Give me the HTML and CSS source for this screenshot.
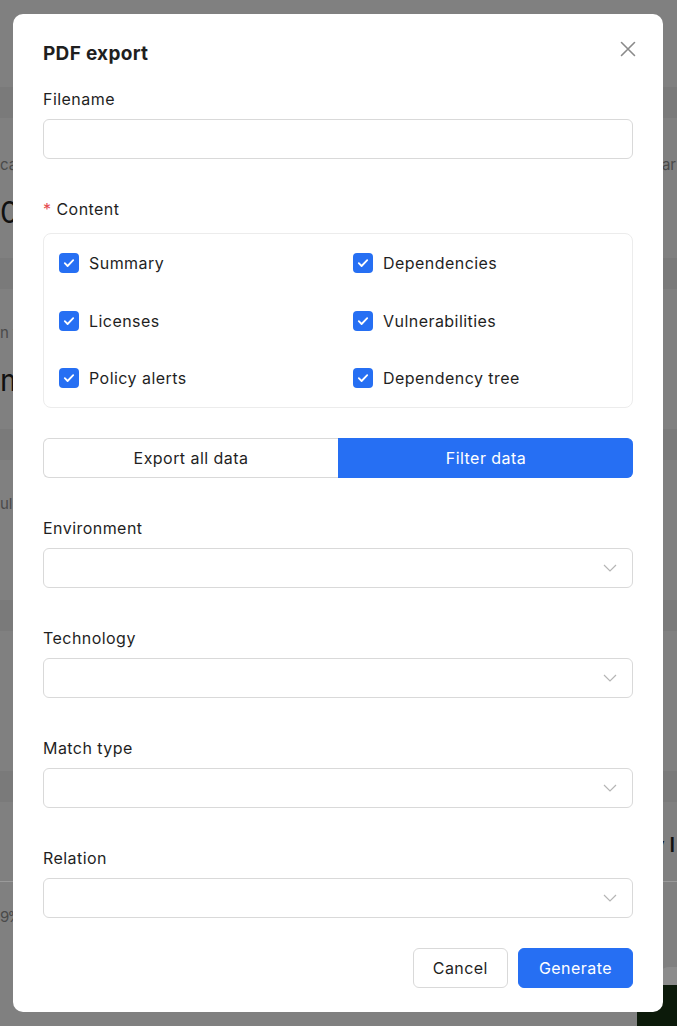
FILE: index.html
```html
<!DOCTYPE html>
<html lang="en">
<head>
<meta charset="utf-8">
<title>PDF export</title>
<link rel="stylesheet" href="styles.css">
</head>
<body>
<div class="page">
  <section class="sect">
    <div class="band"></div>
    <div class="row small"><span class="lt">ca</span><span class="rt">ar</span></div>
    <div class="row big"><span class="lt">0</span><span class="rt"></span></div>
  </section>
  <section class="sect">
    <div class="band"></div>
    <div class="row small s2"><span class="lt">n t</span><span class="rt"></span></div>
    <div class="row big"><span class="lt">m</span><span class="rt"></span></div>
  </section>
  <section class="sect">
    <div class="band"></div>
    <div class="row small s2"><span class="lt">ul</span><span class="rt"></span></div>
  </section>
  <section class="sect">
    <div class="band"></div>
  </section>
  <section class="sect last">
    <div class="band"></div>
    <div class="row bold"><span class="lt"></span><span class="rt2">y I</span></div>
    <div class="rule"></div>
    <div class="row small"><span class="lt pct">9 %</span><span class="rt"></span></div>
    <div class="bubble"></div>
    <div class="blob"></div>
  </section>
</div>

<div class="modal" role="dialog" aria-label="PDF export">
  <div class="head">
    <h2 class="title">PDF export</h2>
    <button class="close" aria-label="Close">
      <svg width="16" height="16" viewBox="0 0 16 16"><path d="M1.5 1.5 L14.5 14.5 M14.5 1.5 L1.5 14.5" stroke="#8a8a8a" stroke-width="1.6" stroke-linecap="round" fill="none"/></svg>
    </button>
  </div>

  <label class="label">Filename</label>
  <div class="input"></div>

  <label class="label gap-top"><span class="req">*</span>Content</label>
  <div class="checks">
    <div class="check"><span class="box"><svg width="12" height="10" viewBox="0 0 12 10"><path d="M1.8 5.2 L4.6 8 L10.2 2.2" stroke="#fff" stroke-width="1.8" fill="none" stroke-linecap="round" stroke-linejoin="round"/></svg></span>Summary</div>
    <div class="check"><span class="box"><svg width="12" height="10" viewBox="0 0 12 10"><path d="M1.8 5.2 L4.6 8 L10.2 2.2" stroke="#fff" stroke-width="1.8" fill="none" stroke-linecap="round" stroke-linejoin="round"/></svg></span>Dependencies</div>
    <div class="check"><span class="box"><svg width="12" height="10" viewBox="0 0 12 10"><path d="M1.8 5.2 L4.6 8 L10.2 2.2" stroke="#fff" stroke-width="1.8" fill="none" stroke-linecap="round" stroke-linejoin="round"/></svg></span>Licenses</div>
    <div class="check"><span class="box"><svg width="12" height="10" viewBox="0 0 12 10"><path d="M1.8 5.2 L4.6 8 L10.2 2.2" stroke="#fff" stroke-width="1.8" fill="none" stroke-linecap="round" stroke-linejoin="round"/></svg></span>Vulnerabilities</div>
    <div class="check"><span class="box"><svg width="12" height="10" viewBox="0 0 12 10"><path d="M1.8 5.2 L4.6 8 L10.2 2.2" stroke="#fff" stroke-width="1.8" fill="none" stroke-linecap="round" stroke-linejoin="round"/></svg></span>Policy alerts</div>
    <div class="check"><span class="box"><svg width="12" height="10" viewBox="0 0 12 10"><path d="M1.8 5.2 L4.6 8 L10.2 2.2" stroke="#fff" stroke-width="1.8" fill="none" stroke-linecap="round" stroke-linejoin="round"/></svg></span>Dependency tree</div>
  </div>

  <div class="segment">
    <button class="seg">Export all data</button>
    <button class="seg active">Filter data</button>
  </div>

  <label class="label gap-top">Environment</label>
  <div class="select"><svg width="14" height="8" viewBox="0 0 14 8"><path d="M1 1 L7 7 L13 1" stroke="#b5b5b5" stroke-width="1.2" fill="none"/></svg></div>

  <label class="label gap-top">Technology</label>
  <div class="select"><svg width="14" height="8" viewBox="0 0 14 8"><path d="M1 1 L7 7 L13 1" stroke="#b5b5b5" stroke-width="1.2" fill="none"/></svg></div>

  <label class="label gap-top">Match type</label>
  <div class="select"><svg width="14" height="8" viewBox="0 0 14 8"><path d="M1 1 L7 7 L13 1" stroke="#b5b5b5" stroke-width="1.2" fill="none"/></svg></div>

  <label class="label gap-top">Relation</label>
  <div class="select"><svg width="14" height="8" viewBox="0 0 14 8"><path d="M1 1 L7 7 L13 1" stroke="#b5b5b5" stroke-width="1.2" fill="none"/></svg></div>

  <div class="footer">
    <button class="btn">Cancel</button>
    <button class="btn primary">Generate</button>
  </div>
</div>
</body>
</html>
```

FILE: styles.css
```css
* { box-sizing: border-box; }

html, body {
  margin: 0;
  padding: 0;
  height: 100%;
}

body {
  background: #808080;
  font-family: Inter, "Noto Sans", "Liberation Sans", sans-serif;
  color: #1f1f1f;
  overflow: hidden;
}

/* dimmed page behind the dialog */
.page {
  padding-top: 87px;
  display: flex;
  flex-direction: column;
}

.sect {
  height: 171px;
  display: flex;
  flex-direction: column;
  position: relative;
}

.band {
  height: 31px;
  background: #7a7a7a;
  flex: none;
}

.row {
  display: flex;
  justify-content: space-between;
  align-items: center;
}

.row.small {
  margin-top: 34px;
  font-size: 15px;
  color: #4a4a4a;
  height: 24px;
}

.row.small.s2 { margin-top: 31px; }

.row.big {
  margin-top: 18px;
  font-size: 30px;
  color: #111;
  height: 36px;
}

.row .lt { white-space: nowrap; }
.row .lt.pct { letter-spacing: -3px; }
.row .rt { margin-right: 1px; white-space: nowrap; }

.row.bold {
  margin-top: 30px;
  height: 26px;
  font-size: 20px;
  font-weight: 600;
  color: #111;
}

.row .rt2 { margin-right: 2px; white-space: nowrap; }

.rule {
  margin-top: 23px;
  height: 1px;
  background: #9a9a9a;
}

.sect.last .row.small { margin-top: 22px; }

.bubble {
  position: absolute;
  right: 0;
  top: 196px;
  width: 20px;
  height: 24px;
  background: #8c8c8c;
  border-top-left-radius: 12px;
  border-bottom-left-radius: 12px;
}

.blob {
  position: absolute;
  right: 0;
  top: 214px;
  width: 40px;
  height: 60px;
  background: #0c1a0a;
  border-top-left-radius: 18px;
}

/* dialog */
.modal {
  position: fixed;
  left: 13px;
  top: 14px;
  width: 650px;
  height: 998px;
  background: #fff;
  border-radius: 10px;
  padding: 28px 30px 24px;
  display: flex;
  flex-direction: column;
  letter-spacing: 0.45px;
}

.head {
  display: flex;
  justify-content: space-between;
  align-items: center;
  height: 24px;
}

.title {
  margin: 0;
  font-size: 19px;
  font-weight: 700;
  line-height: 24px;
  color: #1f1f1f;
  letter-spacing: 0.3px;
}

.close {
  border: 0;
  background: none;
  padding: 0;
  width: 16px;
  height: 16px;
  margin-right: -3px;
  margin-top: -10px;
  display: flex;
}

.label {
  display: block;
  font-size: 16px;
  line-height: 24px;
  margin-top: 21px;
  color: #1f1f1f;
}

.label.gap-top { margin-top: 38px; }

.req {
  color: #e5484d;
  margin-right: 5px;
}

.input, .select {
  margin-top: 8px;
  height: 40px;
  border: 1px solid #d9d9d9;
  border-radius: 6px;
  background: #fff;
}

.select {
  display: flex;
  align-items: center;
  justify-content: flex-end;
  padding-right: 15px;
}

.checks {
  margin-top: 12px;
  border: 1px solid #ececec;
  border-radius: 8px;
  padding: 15px 15px;
  display: grid;
  grid-template-columns: 1fr 1fr;
  column-gap: 30px;
  row-gap: 29.5px;
}

.check {
  display: flex;
  align-items: center;
  height: 28px;
  font-size: 16px;
  color: #1f1f1f;
}

.box {
  width: 20px;
  height: 20px;
  border-radius: 4px;
  background: #266ff3;
  display: flex;
  align-items: center;
  justify-content: center;
  margin-right: 10px;
  flex: none;
}

.segment {
  margin-top: 30px;
  display: flex;
  height: 40px;
}

.seg {
  flex: 1;
  font-family: inherit;
  font-size: 16px;
  letter-spacing: inherit;
  border: 1px solid #d9d9d9;
  background: #fff;
  color: #1f1f1f;
  border-radius: 6px 0 0 6px;
  border-right: 0;
}

.seg.active {
  background: #266ff3;
  border-color: #266ff3;
  color: #fff;
  border-radius: 0 6px 6px 0;
}

.footer {
  margin-top: 30px;
  display: flex;
  justify-content: flex-end;
  gap: 10px;
}

.btn {
  height: 40px;
  padding: 0 19px;
  font-family: inherit;
  font-size: 16px;
  letter-spacing: inherit;
  border: 1px solid #d9d9d9;
  background: #fff;
  color: #1f1f1f;
  border-radius: 6px;
}

.btn.primary {
  background: #266ff3;
  border-color: #266ff3;
  color: #fff;
  padding: 0 20px;
}
```
